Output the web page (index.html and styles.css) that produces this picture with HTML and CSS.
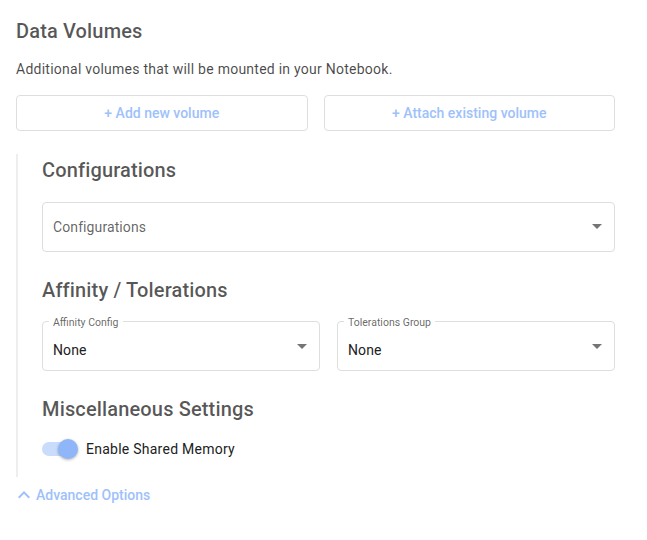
FILE: index.html
```html
<!DOCTYPE html>
<html lang="en">

<head>
    <meta charset="UTF-8">
    <meta name="viewport" content="width=device-width, initial-scale=1.0">
    <title>Data Volumes</title>

    <link rel="stylesheet" href="styles.css">
</head>

<body>
    <div class="form">
        <h2 class="title">Data Volumes</h2>
        <p class="desc">Additional volumes that will be mounted in your Notebook.</p>

        <div class="actions">
            <button class="btn">+ Add new volume</button>
            <button class="btn">+ Attach existing volume</button>
        </div>

        <div class="advanced">
            <h2 class="title">Configurations</h2>
            <div class="field">
                <span class="value muted">Configurations</span>
                <i class="arrow"></i>
            </div>

            <h2 class="title gap">Affinity / Tolerations</h2>
            <div class="row">
                <div class="field outline">
                    <span class="label">Affinity Config</span>
                    <span class="value">None</span>
                    <i class="arrow"></i>
                </div>
                <div class="field outline">
                    <span class="label">Tolerations Group</span>
                    <span class="value">None</span>
                    <i class="arrow"></i>
                </div>
            </div>

            <h2 class="title gap">Miscellaneous Settings</h2>
            <label class="toggle">
                <span class="track"><span class="thumb"></span></span>
                <span>Enable Shared Memory</span>
            </label>
        </div>

        <a class="more" href="#">
            <svg width="24" height="24" viewBox="0 0 24 24">
                <path d="M12 8l-6 6 1.41 1.41L12 10.83l4.59 4.58L18 14z" fill="#9ec1fb" />
            </svg>
            Advanced Options
        </a>
    </div>
</body>

</html>
```

FILE: styles.css
```css
* {
    margin: 0;
    padding: 0;
    box-sizing: border-box;
}

body {
    font-family: Roboto, "Liberation Sans", sans-serif;
    background: #fff;
    color: #212121;
}

.form {
    width: 599px;
    margin-left: 16px;
    padding-top: 15px;
}

.title {
    font-size: 20px;
    font-weight: 500;
    line-height: 32px;
    letter-spacing: .15px;
    color: rgba(0, 0, 0, .66);
}

.title.gap {
    margin-top: 22px;
}

.desc {
    margin-top: 12px;
    font-size: 14px;
    line-height: 20px;
    letter-spacing: .25px;
    color: rgba(0, 0, 0, .72);
}

.actions {
    margin-top: 16px;
    display: grid;
    grid-template-columns: 1fr 1fr;
    gap: 16px;
}

.btn {
    height: 36px;
    background: #fff;
    border: 1px solid #dedede;
    border-radius: 4px;
    font-family: inherit;
    font-size: 14px;
    font-weight: 500;
    color: #9ec1fb;
}

/* 左边竖线的区域 */
.advanced {
    margin-top: 23px;
    border-left: 2px solid #eee;
    padding-left: 24px;
    padding-bottom: 16px;
}

.field {
    position: relative;
    height: 50px;
    margin-top: 16px;
    border: 1px solid #dedede;
    border-radius: 4px;
    padding: 0 10px;
    display: flex;
    align-items: center;
    justify-content: space-between;
}

.field .value {
    font-size: 14px;
    letter-spacing: .1px;
    color: #212121;
}

.field .value.muted {
    color: rgba(0, 0, 0, .62);
}

.field .arrow {
    width: 0;
    height: 0;
    margin-right: 2px;
    margin-top: -1px;
    border-left: 5px solid transparent;
    border-right: 5px solid transparent;
    border-top: 5px solid #757575;
}

.row {
    margin-top: 15px;
    display: grid;
    grid-template-columns: 1fr 1fr;
    gap: 17px;
}

.row .field {
    margin-top: 0;
    padding-top: 7px;
}

.row .field .arrow {
    margin-top: -7px;
}

/* 浮在边框上的小标签 */
.field .label {
    position: absolute;
    top: -5px;
    left: 6px;
    padding: 0 4px;
    background: #fff;
    font-size: 10.5px;
    line-height: 12px;
    color: rgba(0, 0, 0, .62);
}

.toggle {
    margin-top: 12px;
    height: 24px;
    display: flex;
    align-items: center;
    gap: 8px;
    font-size: 14px;
    letter-spacing: .25px;
    color: #212121;
}

.track {
    position: relative;
    width: 34px;
    height: 14px;
    border-radius: 7px;
    background: #c9dcfc;
    margin-right: 2px;
}

.thumb {
    position: absolute;
    top: -3px;
    right: -2px;
    width: 20px;
    height: 20px;
    border-radius: 50%;
    background: #8fb6f9;
    box-shadow: 0 1px 3px rgba(0, 0, 0, .3);
}

.more {
    margin-top: 6px;
    margin-left: -4px;
    height: 24px;
    display: inline-flex;
    align-items: center;
    font-size: 14px;
    font-weight: 500;
    color: #9ec1fb;
    text-decoration: none;
}
```
